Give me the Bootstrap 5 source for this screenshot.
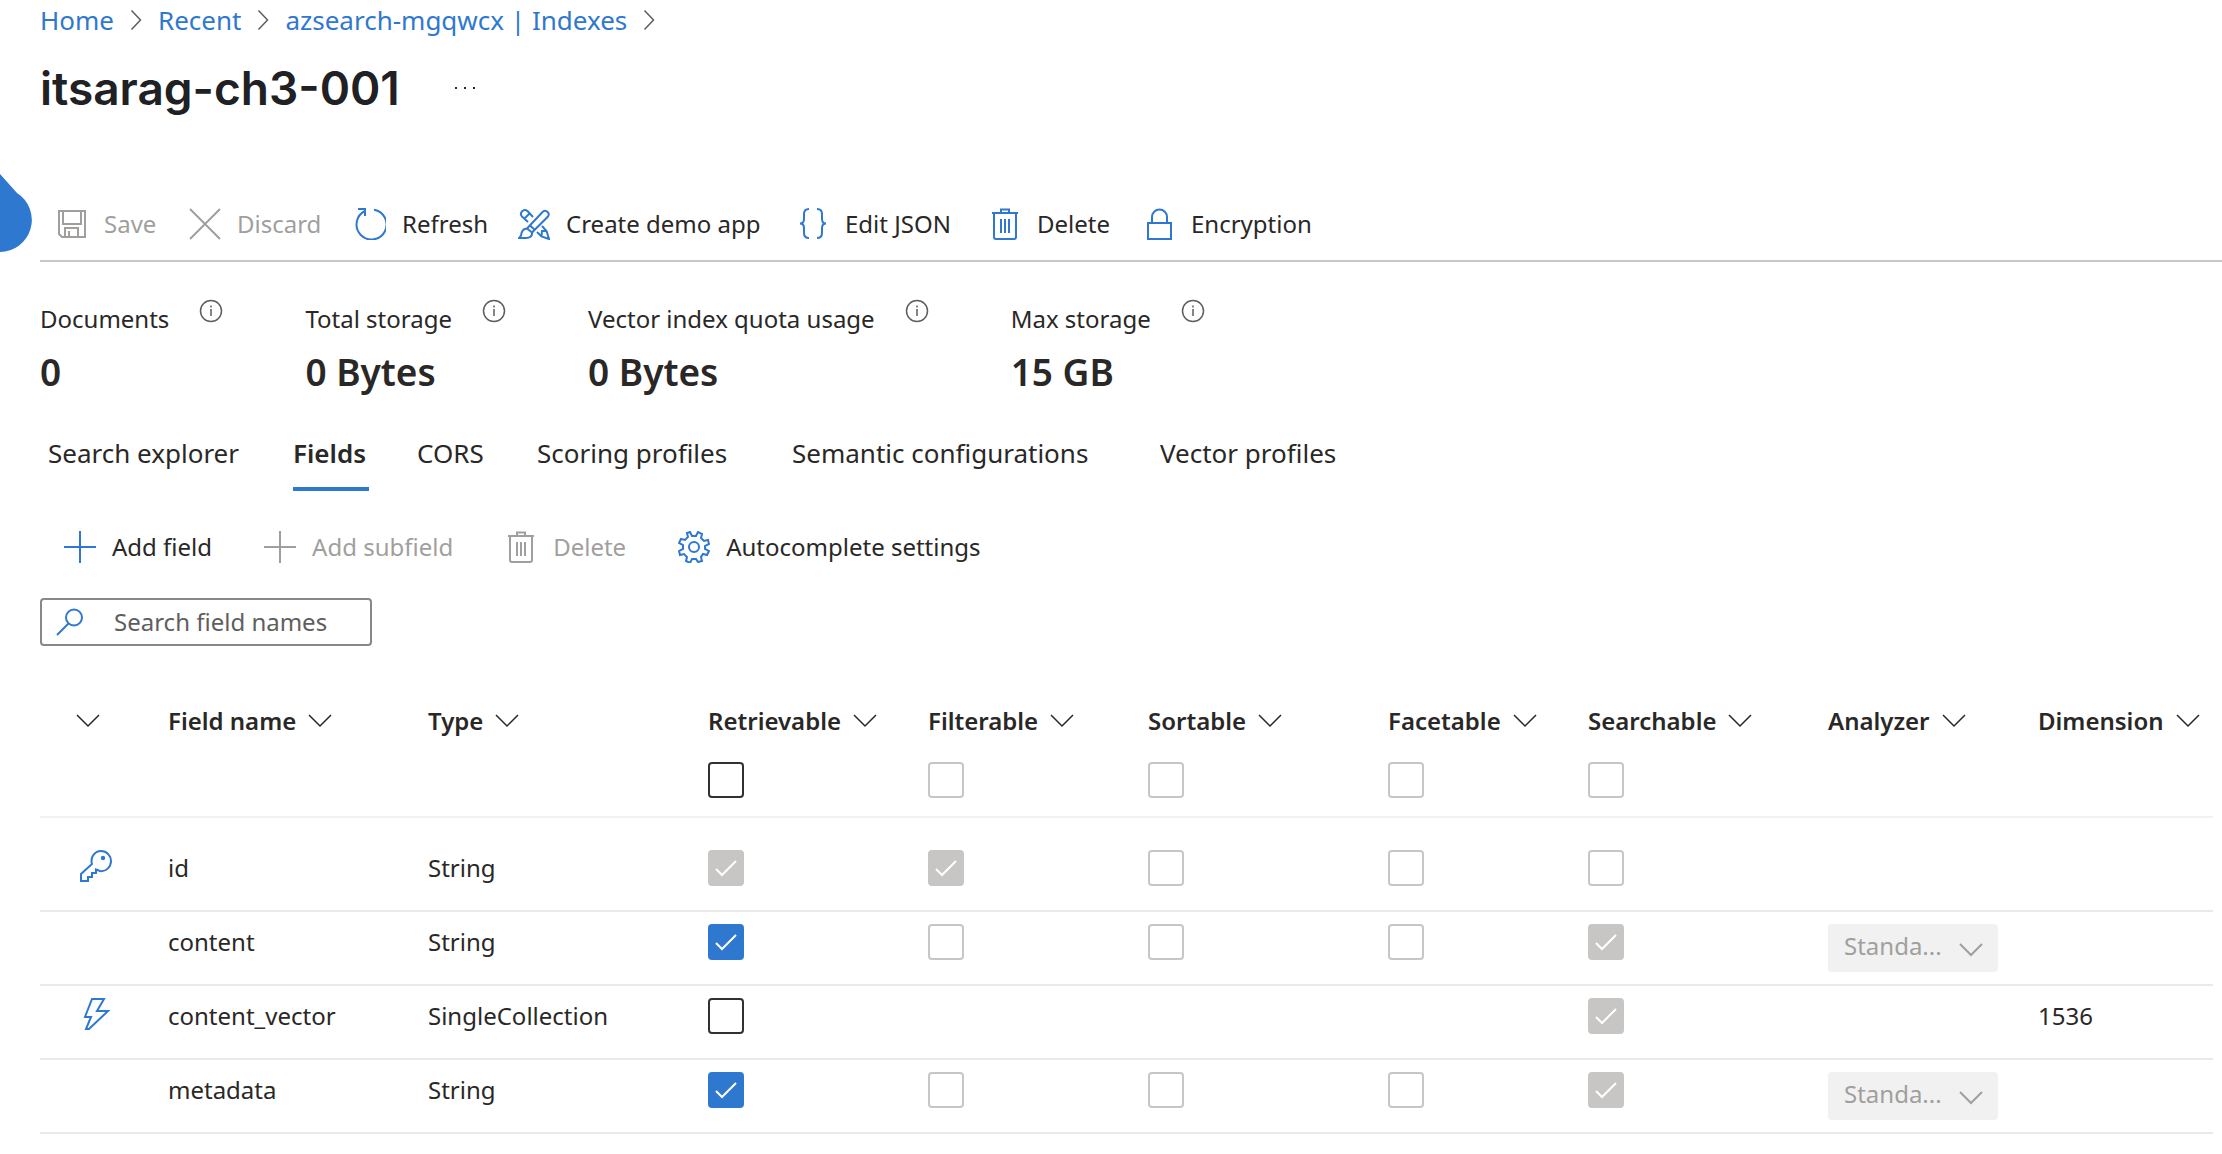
<!DOCTYPE html>
<html lang="en">
<head>
<meta charset="utf-8">
<meta name="viewport" content="width=device-width, initial-scale=1">
<title>itsarag-ch3-001 - Indexes</title>
<link href="https://cdn.jsdelivr.net/npm/bootstrap@5.3.0/dist/css/bootstrap.min.css" rel="stylesheet">
<style>
:root{--az-blue:#2f78cf;--az-ink:#292827;--az-off:#a19f9d;--az-line:#eaeaea}
body{font-family:"Noto Sans","Open Sans",sans-serif;font-size:24px;line-height:36px;color:var(--az-ink);background:#fff;overflow-x:hidden}
.page{padding-left:40px}
svg{fill:none;stroke:currentColor;stroke-width:2;flex:none;display:block}
.ico{width:32px;height:32px}
.chev{width:24px;height:14px}
.crumbs{padding-top:2px;gap:16px;font-size:26px}
.crumbs a{color:var(--az-blue);text-decoration:none}
.crumbs svg{width:12px;height:22px;color:#605e5c;stroke-width:1.5}
.title-row{padding-top:20px;gap:52px}
.title-row h1{font:600 46px/60px Inter,sans-serif;color:#202124;margin:0}
.plain{background:none;border:0;padding:0;color:inherit;display:flex;align-items:center;min-height:36px}
.plain:disabled{color:var(--az-off)}
.plain:disabled .ico{color:#a19f9d}
.tools .plain{gap:16px;white-space:nowrap}
.tools .ico{color:var(--az-blue)}
.top-tools{grid-template-columns:101px 133px 132px 247px 160px 122px auto;justify-content:start;gap:32px;margin-top:70px;height:74px;padding-left:16px;border-bottom:2px solid #c8c8c8}
.field-tools{padding:38px 0 33px 24px;gap:52px}
.metrics{padding-top:39px;gap:82px}
.metrics dt{font-weight:400;display:flex;gap:30px;margin-bottom:9px}
.metrics dd{font-size:37px;line-height:52px;font-weight:600;margin:0}
.metrics svg{width:24px;height:24px;color:#605e5c;margin-top:-2px;stroke-width:1.5}
.tabs{display:grid;grid-template-columns:197px 76px 72px 207px 320px auto;justify-content:start;padding:37px 0 0 8px;font-size:26px;gap:48px}
.tabs .nav-link{padding:0 0 16px;color:inherit;border-bottom:4px solid transparent;white-space:nowrap}
.tabs .active{font-weight:600;border-color:var(--az-blue)}
.find{width:332px;height:48px;border:2px solid #8a8886;border-radius:4px;padding:0 14px;gap:30px}
.find input{border:0;outline:0;padding:0;flex:1;min-width:0;background:none}
.find input::placeholder{color:#605e5c;opacity:1}
.find svg{width:28px;height:28px;color:var(--az-blue)}
.grid-area{padding:57px 9px 0 0}
.fields{width:100%;table-layout:fixed}
.fields th,.fields td{padding:0;vertical-align:top;white-space:nowrap}
.fields .plain{font-weight:600;gap:12px}
.fields .plain .chev{color:#292827;stroke-width:1.5}
.fields .sorter{padding-left:36px}
.fields .toggles td{padding:23px 0 18px;border-bottom:2px solid #f1f1f1}
.fields tbody td{height:74px;padding-top:12px;border-bottom:2px solid var(--az-line)}
.fields tbody tr:first-child td{height:94px;padding-top:32px}
.fields tbody .ico{margin-left:40px;color:var(--az-blue)}
.tick{appearance:none;display:block;width:36px;height:36px;margin:0;border:2px solid #323130;border-radius:4px;background:#fff center/32px no-repeat}
.tick:disabled{border-color:#c8c6c4}
.tick:checked{border-color:var(--az-blue);background-color:var(--az-blue);background-image:url("data:image/svg+xml,%3Csvg xmlns='http://www.w3.org/2000/svg' viewBox='0 0 32 32' fill='none' stroke='white' stroke-width='2'%3E%3Cpath d='M6 17l6 6L26 9'/%3E%3C/svg%3E")}
.tick:checked:disabled{border-color:#c8c6c4;background-color:#c8c6c4}
.picker{appearance:none;display:block;width:170px;height:48px;border:0;border-radius:4px;padding:0 52px 4px 16px;color:var(--az-off);opacity:1;background:#f1f1f1 url("data:image/svg+xml,%3Csvg xmlns='http://www.w3.org/2000/svg' viewBox='0 0 24 14' fill='none' stroke='%23a19f9d' stroke-width='2'%3E%3Cpath d='M1 1l11 11L23 1'/%3E%3C/svg%3E") right 15px top 19px/24px 14px no-repeat}
.drop{position:absolute;left:0;top:174px;width:32px;height:78px;fill:var(--az-blue);stroke:none}
</style>
</head>
<body>
<svg width="0" height="0" class="position-absolute" aria-hidden="true">
<symbol id="chev" viewBox="0 0 24 14"><path d="M1 1l11 11L23 1"/></symbol>
<symbol id="next" viewBox="0 0 12 22"><path d="M1.500 1.500L10.500 11l-9 9.500"/></symbol>
<symbol id="save" viewBox="0 0 32 32"><path d="M3 3h26v26H6l-3-3zM7 3v13h18V3M9 29v-9h13v9M13 29v-6"/></symbol>
<symbol id="cross" viewBox="0 0 32 32"><path d="M1 1l30 30M31 1L1 31"/></symbol>
<symbol id="refresh" viewBox="0 0 32 32"><path d="M4 1h7v7M11 1v2A15 15 0 1 0 20 1.700"/></symbol>
<symbol id="design" viewBox="0 0 32 32"><path d="M9 20.500L25 3.500a3.600 3.600 0 0 1 5 5L14 24.500M9 20.500c-4 0-5.500 3-6 7L1 30h7c4 0 6.500-2 6-5.500zM12 17.500l5 4.500M10 14L4 8.500C1 5 5.500 0 9.500 3l5.500 6M6.500 10.500L12 5M19 24l4.500 4.500L31 31l-2.500-8-4.500-5M23.500 28.500L24 23l4.500 0"/></symbol>
<symbol id="json" viewBox="0 0 32 32"><path d="M12 1C8 1 7 3 7 6v5c0 3-1 4.500-4 4.500 3 0 4 1.500 4 4.500v5c0 3 1 5 5 5M20 1c4 0 5 2 5 5v5c0 3 1 4.500 4 4.500-3 0-4 1.500-4 4.500v5c0 3-1 5-5 5"/></symbol>
<symbol id="bin" viewBox="0 0 32 32"><path d="M3 5h26M12 5V1.500h8V5M5 5v24q0 2 2 2h18q2 0 2-2V5M12 11v14M16 11v14M20 11v14"/></symbol>
<symbol id="lock" viewBox="0 0 32 32"><path d="M5 15h23v16H5zM9 15V9a7.500 7.500 0 0 1 15 0v6"/></symbol>
<symbol id="plus" viewBox="0 0 32 32"><path d="M16 0v32M0 16h32"/></symbol>
<symbol id="gear" viewBox="0 0 32 32"><circle cx="16" cy="16" r="5"/><path d="M12 1l2 4h4l2-4 4 2-1 4 3 3 4-1 1 4-4 2v3l4 2-2 4-4-1-2 3 1 4-4 1-2-3h-4l-2 4-4-2 1-4-3-3-4 1-1-4 4-2v-4l-4-2 2-4 4 1 3-3-1-4z"/></symbol>
<symbol id="find" viewBox="0 0 28 28"><circle cx="18" cy="9.500" r="8"/><path d="M12.500 15.500L1 27"/></symbol>
<symbol id="info" viewBox="0 0 24 24"><circle cx="12" cy="12" r="10.500"/><path d="M12 10v7M12 6.500v2"/></symbol>
<symbol id="key" viewBox="0 0 32 32"><path d="M1 31v-7l11-10C10 7 15 1 21 1c6 0 10 5 10 10 0 6-5 11-11 10l-4-1.500V23h-4v4H8v4z"/><circle cx="23" cy="8" r="1.200" fill="currentColor"/></symbol>
<symbol id="bolt" viewBox="0 0 32 32"><path d="M12 1h12l-7 12h11L9 31H6l5-12H5z"/></symbol>
</svg>
<svg class="drop" viewBox="0 0 32 78" aria-hidden="true"><path d="M0 0L17 19A32 32 0 0 1 0 78z"/></svg>
<main class="page">
<nav class="crumbs d-flex align-items-center" aria-label="Breadcrumb">
<a href="#">Home</a><svg><use href="#next"/></svg>
<a href="#">Recent</a><svg><use href="#next"/></svg>
<a href="#">azsearch-mgqwcx | Indexes</a><svg><use href="#next"/></svg>
</nav>
<header class="title-row d-flex align-items-center">
<h1>itsarag-ch3-001</h1>
<button class="plain" aria-label="More"><svg width="26" height="6" viewBox="0 0 26 6"><path d="M3 3h2M12 3h2M21 3h2"/></svg></button>
</header>
<div class="tools top-tools d-grid align-items-center" role="toolbar" aria-label="Index commands">
<button class="plain" disabled><svg class="ico"><use href="#save"/></svg>Save</button>
<button class="plain" disabled><svg class="ico"><use href="#cross"/></svg>Discard</button>
<button class="plain"><svg class="ico"><use href="#refresh"/></svg>Refresh</button>
<button class="plain"><svg class="ico"><use href="#design"/></svg>Create demo app</button>
<button class="plain"><svg class="ico"><use href="#json"/></svg>Edit JSON</button>
<button class="plain"><svg class="ico"><use href="#bin"/></svg>Delete</button>
<button class="plain"><svg class="ico"><use href="#lock"/></svg>Encryption</button>
</div>
<dl class="metrics d-flex mb-0">
<div><dt>Documents <svg><use href="#info"/></svg></dt><dd>0</dd></div>
<div><dt>Total storage <svg><use href="#info"/></svg></dt><dd>0 Bytes</dd></div>
<div><dt>Vector index quota usage <svg><use href="#info"/></svg></dt><dd>0 Bytes</dd></div>
<div><dt>Max storage <svg><use href="#info"/></svg></dt><dd>15 GB</dd></div>
</dl>
<nav class="tabs">
<a class="nav-link" href="#">Search explorer</a>
<a class="nav-link active" href="#" aria-current="page">Fields</a>
<a class="nav-link" href="#">CORS</a>
<a class="nav-link" href="#">Scoring profiles</a>
<a class="nav-link" href="#">Semantic configurations</a>
<a class="nav-link" href="#">Vector profiles</a>
</nav>
<div class="tools field-tools d-flex align-items-center" role="toolbar" aria-label="Field commands">
<button class="plain"><svg class="ico"><use href="#plus"/></svg>Add field</button>
<button class="plain" disabled><svg class="ico"><use href="#plus"/></svg>Add subfield</button>
<button class="plain" disabled><svg class="ico"><use href="#bin"/></svg>Delete</button>
<button class="plain"><svg class="ico"><use href="#gear"/></svg>Autocomplete settings</button>
</div>
<label class="find d-flex align-items-center"><svg><use href="#find"/></svg><input type="text" placeholder="Search field names" aria-label="Search field names"></label>
<div class="grid-area">
<table class="fields">
<colgroup><col style="width:128px"><col style="width:260px"><col style="width:280px"><col style="width:220px"><col style="width:220px"><col style="width:240px"><col style="width:200px"><col style="width:240px"><col style="width:210px"><col></colgroup>
<thead>
<tr>
<th><button class="plain sorter" aria-label="Sort"><svg class="chev"><use href="#chev"/></svg></button></th>
<th><button class="plain">Field name<svg class="chev"><use href="#chev"/></svg></button></th>
<th><button class="plain">Type<svg class="chev"><use href="#chev"/></svg></button></th>
<th><button class="plain">Retrievable<svg class="chev"><use href="#chev"/></svg></button></th>
<th><button class="plain">Filterable<svg class="chev"><use href="#chev"/></svg></button></th>
<th><button class="plain">Sortable<svg class="chev"><use href="#chev"/></svg></button></th>
<th><button class="plain">Facetable<svg class="chev"><use href="#chev"/></svg></button></th>
<th><button class="plain">Searchable<svg class="chev"><use href="#chev"/></svg></button></th>
<th><button class="plain">Analyzer<svg class="chev"><use href="#chev"/></svg></button></th>
<th><button class="plain">Dimension<svg class="chev"><use href="#chev"/></svg></button></th>
</tr>
<tr class="toggles">
<td></td><td></td><td></td>
<td><input type="checkbox" class="tick" aria-label="All retrievable"></td>
<td><input type="checkbox" class="tick" aria-label="All filterable" disabled></td>
<td><input type="checkbox" class="tick" aria-label="All sortable" disabled></td>
<td><input type="checkbox" class="tick" aria-label="All facetable" disabled></td>
<td><input type="checkbox" class="tick" aria-label="All searchable" disabled></td>
<td></td><td></td>
</tr>
</thead>
<tbody>
<tr>
<td><svg class="ico"><use href="#key"/></svg></td><td>id</td><td>String</td>
<td><input type="checkbox" class="tick" aria-label="id retrievable" checked disabled></td>
<td><input type="checkbox" class="tick" aria-label="id filterable" checked disabled></td>
<td><input type="checkbox" class="tick" aria-label="id sortable" disabled></td>
<td><input type="checkbox" class="tick" aria-label="id facetable" disabled></td>
<td><input type="checkbox" class="tick" aria-label="id searchable" disabled></td>
<td></td><td></td>
</tr>
<tr>
<td></td><td>content</td><td>String</td>
<td><input type="checkbox" class="tick" aria-label="content retrievable" checked></td>
<td><input type="checkbox" class="tick" aria-label="content filterable" disabled></td>
<td><input type="checkbox" class="tick" aria-label="content sortable" disabled></td>
<td><input type="checkbox" class="tick" aria-label="content facetable" disabled></td>
<td><input type="checkbox" class="tick" aria-label="content searchable" checked disabled></td>
<td><select class="picker" aria-label="content analyzer" disabled><option>Standa...</option></select></td><td></td>
</tr>
<tr>
<td><svg class="ico"><use href="#bolt"/></svg></td><td>content_vector</td><td>SingleCollection</td>
<td><input type="checkbox" class="tick" aria-label="content_vector retrievable"></td>
<td></td><td></td><td></td>
<td><input type="checkbox" class="tick" aria-label="content_vector searchable" checked disabled></td>
<td></td><td>1536</td>
</tr>
<tr>
<td></td><td>metadata</td><td>String</td>
<td><input type="checkbox" class="tick" aria-label="metadata retrievable" checked></td>
<td><input type="checkbox" class="tick" aria-label="metadata filterable" disabled></td>
<td><input type="checkbox" class="tick" aria-label="metadata sortable" disabled></td>
<td><input type="checkbox" class="tick" aria-label="metadata facetable" disabled></td>
<td><input type="checkbox" class="tick" aria-label="metadata searchable" checked disabled></td>
<td><select class="picker" aria-label="metadata analyzer" disabled><option>Standa...</option></select></td><td></td>
</tr>
</tbody>
</table>
</div>
</main>
<script src="https://cdn.jsdelivr.net/npm/bootstrap@5.3.0/dist/js/bootstrap.bundle.min.js"></script>
</body>
</html>
